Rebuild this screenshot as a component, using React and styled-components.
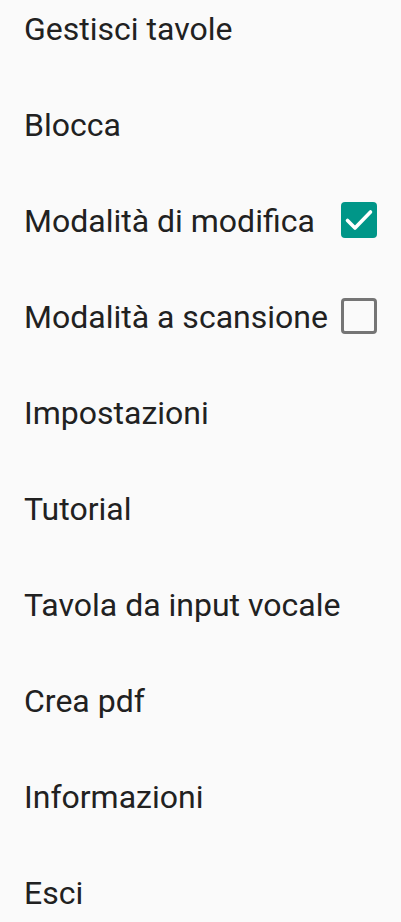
import React from 'react';
import styled, { createGlobalStyle } from 'styled-components';

const GlobalStyle = createGlobalStyle`
  html, body {
    margin: 0;
    padding: 0;
    background: #fafafa;
  }
  body {
    font-family: Roboto, "Noto Sans", sans-serif;
  }
`;

const menuItems = [
  { label: 'Gestisci tavole' },
  { label: 'Blocca' },
  { label: 'Modalità di modifica', checkbox: true, checked: true },
  { label: 'Modalità a scansione', checkbox: true, checked: false },
  { label: 'Impostazioni' },
  { label: 'Tutorial' },
  { label: 'Tavola da input vocale' },
  { label: 'Crea pdf' },
  { label: 'Informazioni' },
  { label: 'Esci' },
];

const App = () => {
  return (
    <>
      <GlobalStyle />
      <Menu>
        {menuItems.map((item) => (
          <MenuRow key={item.label}>
            <Label>{item.label}</Label>
            {item.checkbox && (
              <Box $checked={item.checked}>
                {item.checked && (
                  <svg width="36" height="36" viewBox="0 0 36 36">
                    <path d="M6.5 18.5l7.5 7.5L29.5 10" fill="none" stroke="#fff" strokeWidth="3.6" strokeLinecap="round" strokeLinejoin="round" />
                  </svg>
                )}
              </Box>
            )}
          </MenuRow>
        ))}
      </Menu>
    </>
  );
};

// Lista del menu (scrollata leggermente in alto)
const Menu = styled.div`
  display: flex;
  flex-direction: column;
  margin-top: -19px;
  width: 401px;
  height: 941px;
  overflow: hidden;
  background: #fafafa;
`;

const MenuRow = styled.div`
  display: flex;
  align-items: center;
  justify-content: space-between;
  height: 96px;
  flex-shrink: 0;
  padding: 0 24px;
`;

const Label = styled.span`
  font-size: 32px;
  color: #212121;
  white-space: nowrap;
`;

const Box = styled.div`
  box-sizing: border-box;
  flex-shrink: 0;
  width: 36px;
  height: 36px;
  border-radius: 4px;
  display: flex;
  align-items: center;
  justify-content: center;
  background: ${(p) => (p.$checked ? '#009688' : 'transparent')};
  border: ${(p) => (p.$checked ? 'none' : '3.5px solid #757575')};
  margin-top: -2px;
`;

export default App;
